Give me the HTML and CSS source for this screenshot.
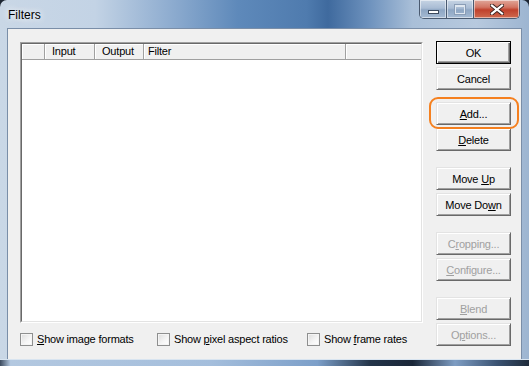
FILE: index.html
```html
<!DOCTYPE html>
<html lang="en">
<head>
    <meta charset="UTF-8">
    <title>Filters</title>
    <link rel="stylesheet" href="styles.css">
</head>
<body>
    <div class="window">
        <div class="titlebar">
            <span class="title">Filters</span>
            <div class="caption-btns">
                <span class="cb cb-min"><i></i></span>
                <span class="cb cb-max"><i></i></span>
                <span class="cb cb-close">
                    <svg width="14" height="11" viewBox="0 0 14 11">
                        <path d="M2 1.5 L12 9.5 M12 1.5 L2 9.5" stroke="#3a2320" stroke-width="4" stroke-linecap="square"/>
                        <path d="M2 1.5 L12 9.5 M12 1.5 L2 9.5" stroke="#fff" stroke-width="2.2" stroke-linecap="square"/>
                    </svg>
                </span>
            </div>
        </div>

        <div class="client">
            <div class="main">
                <div class="listview">
                    <div class="lv-inner">
                        <div class="lv-header">
                            <div class="col col-icon"></div>
                            <div class="col col-input">Input</div>
                            <div class="col col-output">Output</div>
                            <div class="col col-filter">Filter</div>
                            <div class="col col-rest"></div>
                        </div>
                    </div>
                </div>
                <div class="options">
                    <label class="check"><span class="box"></span><span><u>S</u>how image formats</span></label>
                    <label class="check"><span class="box"></span><span>Show <u>p</u>ixel aspect ratios</span></label>
                    <label class="check"><span class="box"></span><span>Show <u>f</u>rame rates</span></label>
                </div>
            </div>

            <div class="buttons">
                <div class="btn-group">
                    <button class="btn default">OK</button>
                    <button class="btn">Cancel</button>
                </div>
                <div class="btn-group group-edit">
                    <span class="highlight"><button class="btn"><u>A</u>dd...</button></span>
                    <button class="btn"><u>D</u>elete</button>
                </div>
                <div class="btn-group">
                    <button class="btn">Move <u>U</u>p</button>
                    <button class="btn">Move Do<u>w</u>n</button>
                </div>
                <div class="btn-group">
                    <button class="btn" disabled>C<u>r</u>opping...</button>
                    <button class="btn" disabled><u>C</u>onfigure...</button>
                </div>
                <div class="btn-group">
                    <button class="btn" disabled><u>B</u>lend</button>
                    <button class="btn" disabled>O<u>p</u>tions...</button>
                </div>
            </div>
        </div>

        <div class="bottom-frame"></div>
    </div>
</body>
</html>
```

FILE: styles.css
```css
body {
    margin: 0;
    background-color: #1d2633;
    font-family: "Liberation Sans", Arial, sans-serif;
    font-size: 11px;
    letter-spacing: -0.2px;
    color: #000;
}
.window {
    width: 529px;
    height: 366px;
    border-radius: 7px 7px 0 0;
    overflow: hidden;
    display: flex;
    flex-direction: column;
    background: linear-gradient(90deg, #c9d7e6 0%, #c3d3e5 18%, #8fadd0 32%, #5e89ba 45%, #4f7bae 58%, #3f6a9e 62%, #6f93be 70%, #a9bfd8 78%, #b7c9de 90%, #9db5d1 100%);
}
.titlebar {
    height: 29px;
    display: flex;
    align-items: flex-start;
    padding-left: 8px;
    flex-shrink: 0;
}
.title {
    font-size: 12px;
    letter-spacing: 0;
    line-height: 30px;
    text-shadow: 0 0 6px #fff, 0 0 10px rgba(255, 255, 255, 0.8);
}
.caption-btns {
    margin-left: auto;
    margin-right: 9px;
    display: flex;
    height: 19px;
    border: 1px solid #4a5a70;
    border-top: none;
    border-radius: 0 0 5px 5px;
    overflow: hidden;
    box-sizing: border-box;
}
.cb {
    display: flex;
    align-items: center;
    justify-content: center;
    height: 100%;
    box-shadow: inset 0 0 0 1px rgba(255, 255, 255, 0.5);
    background: linear-gradient(180deg, #c6d4e4 0%, #a9bcd4 45%, #8ea6c3 55%, #a5bad3 100%);
}
.cb-min {
    width: 26px;
    border-right: 1px solid #4a5a70;
}
.cb-min i {
    display: block;
    width: 9px;
    height: 2px;
    margin-top: 5px;
    background-color: #fff;
    border: 1px solid #3c4a5e;
}
.cb-max {
    width: 26px;
    border-right: 1px solid #4a5a70;
}
.cb-max i {
    display: block;
    width: 8px;
    height: 6px;
    border: 1px solid #dfe7f0;
    box-shadow: 0 0 0 1px #8a9db6;
    border-top-width: 2px;
}
.cb-close {
    width: 45px;
    background: linear-gradient(180deg, #e0a79a 0%, #d27563 40%, #c0412c 55%, #cf6a4f 100%);
}
.client {
    flex: 1;
    margin: 0 8px;
    background-color: #f0f0f0;
    box-shadow: 0 0 0 1px #7a8ea8;
    display: flex;
    gap: 13px;
    padding: 12px 10px 0 12px;
}
.main {
    width: 403px;
}
.listview {
    margin-top: 1px;
    height: 281px;
    box-sizing: border-box;
    border: 1px solid;
    border-color: #a0a0a0 #fff #fff #a0a0a0;
}
.lv-inner {
    height: 100%;
    box-sizing: border-box;
    border: 1px solid;
    border-color: #696969 #e3e3e3 #e3e3e3 #696969;
    background-color: #fff;
}
.lv-header {
    display: flex;
    height: 16px;
    background-color: #f0f0f0;
}
.col {
    box-sizing: border-box;
    border-right: 1px solid #a0a0a0;
    border-bottom: 1px solid #a0a0a0;
    box-shadow: inset 1px 1px 0 #fff;
    padding-left: 7px;
    line-height: 15px;
    white-space: nowrap;
}
.col-icon { width: 23px; }
.col-input { width: 50px; }
.col-output { width: 49px; }
.col-filter { width: 202px; padding-left: 4px; }
.col-rest { flex: 1; border-right: none; }

.options {
    margin-top: 9px;
    display: grid;
    grid-template-columns: 137px 150px auto;
}
.check {
    display: flex;
    align-items: center;
    height: 14px;
    white-space: nowrap;
}
.box {
    width: 13px;
    height: 13px;
    flex-shrink: 0;
    box-sizing: border-box;
    border: 1px solid #8e8f8f;
    background: linear-gradient(135deg, #dcdcdc 0%, #f6f6f6 60%, #fff 100%);
    box-shadow: inset 0 0 0 1px #f4f4f4;
    margin-right: 4px;
}

.buttons {
    width: 75px;
    display: flex;
    flex-direction: column;
    gap: 16px;
}
.buttons .group-edit {
    margin-top: -4px;
}
.btn-group {
    display: flex;
    flex-direction: column;
    gap: 3px;
}
.btn {
    width: 75px;
    height: 23px;
    padding: 0;
    box-sizing: border-box;
    background-color: #f0f0f0;
    border: 1px solid;
    border-color: #e3e3e3 #696969 #696969 #e3e3e3;
    box-shadow: inset 1px 1px 0 #fff, inset -1px -1px 0 #a0a0a0;
    font-family: inherit;
    font-size: 11px;
    letter-spacing: -0.2px;
    color: #000;
    text-align: center;
}
.btn.default {
    border-color: #000;
    box-shadow: inset 1px 1px 0 #fff, inset -1px -1px 0 #696969, inset -2px -2px 0 #a0a0a0;
}
.btn:disabled {
    color: #a0a0a0;
}
.highlight {
    position: relative;
    display: block;
    height: 23px;
}
.highlight::after {
    content: "";
    position: absolute;
    top: -5px;
    left: -7px;
    right: -8px;
    bottom: -4px;
    border: 2px solid #f5801f;
    border-radius: 9px;
}
.bottom-frame {
    height: 7px;
    flex-shrink: 0;
    border-top: 1px solid #d8e4f0;
    box-sizing: border-box;
    background: linear-gradient(90deg, #3b4a5e 0%, #b3c8e0 2%, #a4bedc 40%, #7c9fc9 60%, #233449 70%, #1a2638 78%, #7e9dc3 86%, #3a5272 94%, #1f2b3b 100%);
}
```
